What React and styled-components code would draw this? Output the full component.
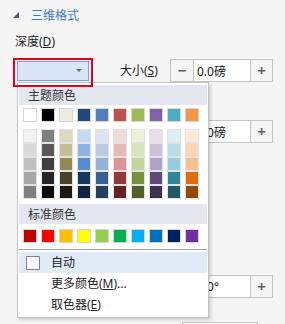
import React from "react";
import styled, { createGlobalStyle } from "styled-components";

const Global = createGlobalStyle`
  html, body { margin: 0; padding: 0; background: #f5f5f5; }
  body {
    font-family: "Noto Sans", "Noto Sans CJK SC", sans-serif;
    font-size: 12px;
    color: #222;
    width: 285px;
    height: 324px;
    overflow: hidden;
  }
`;

const Panel = styled.div`
  display: flex;
  flex-direction: column;
  width: 285px;
  box-sizing: border-box;
  & > * {
    flex-shrink: 0;
  }
`;

const Header = styled.div`
  height: 30px;
  display: flex;
  align-items: center;
  padding-left: 13px;
  gap: 12px;
  color: #3a78d0;
  font-size: 12px;
`;

const Label = styled.div`
  margin-top: 4px;
  padding-left: 15px;
  line-height: 16px;
  height: 16px;
  color: #222;
`;

const U = styled.span`
  text-decoration: underline;
  text-underline-offset: 1px;
`;

const Row = styled.div`
  display: flex;
  align-items: center;
  height: 23px;
  margin-top: ${(p) => p.$top}px;
  padding-left: 17px;
`;

const DropWrap = styled.div`
  position: relative;
  width: 72px;
  height: 20px;
  z-index: 5;
`;

const DropButton = styled.div`
  width: 72px;
  height: 20px;
  box-sizing: border-box;
  border: 1px solid #7ea3d8;
  background: #dae6f7;
  display: flex;
  align-items: center;
  justify-content: flex-end;
  padding-right: 6px;
`;

const RedMark = styled.div`
  position: absolute;
  left: -4px;
  top: -3px;
  width: 80px;
  height: 29px;
  box-sizing: border-box;
  border: 2px solid #e60012;
  z-index: 20;
  pointer-events: none;
`;

const SideLabel = styled.div`
  width: 50px;
  margin-left: 31px;
  line-height: 16px;
`;

const Spacer = styled.div`
  width: 153px;
`;

const Stepper = styled.div`
  display: flex;
  height: 23px;
  box-sizing: border-box;
  border: 1px solid #c6c6c6;
`;

const StepBtn = styled.div`
  width: ${(p) => p.$w}px;
  display: flex;
  align-items: center;
  justify-content: center;
  color: #5d6470;
  font-size: 15px;
  font-weight: bold;
  line-height: 1;
`;

const StepInput = styled.div`
  width: 58px;
  background: #fff;
  border-left: 1px solid #c6c6c6;
  border-right: 1px solid #c6c6c6;
  display: flex;
  align-items: center;
  padding-left: 3px;
  box-sizing: border-box;
  color: #111;
  font-size: 12px;
`;

const BottomBox = styled.div`
  margin-top: 24px;
  margin-left: 182px;
  width: 76px;
  height: 2px;
  border: 1px solid #c6c6c6;
  border-bottom: none;
  box-sizing: border-box;
`;

const Popup = styled.div`
  position: absolute;
  left: 0;
  top: 21px;
  width: 192px;
  box-sizing: border-box;
  background: #fff;
  border: 1px solid #c4c4c4;
  box-shadow: 2px 2px 3px rgba(0, 0, 0, 0.16);
  padding: 2px 1px;
  display: flex;
  flex-direction: column;
`;

const Band = styled.div`
  height: 20px;
  margin-top: ${(p) => p.$top || 0}px;
  background: #e3e7f0;
  display: flex;
  align-items: center;
  padding-left: 9px;
  color: #333;
  font-size: 12px;
`;

const SwatchRow = styled.div`
  display: flex;
  gap: 4px;
  padding-left: 4px;
  margin-top: ${(p) => p.$top}px;
`;

const Swatch = styled.div`
  width: 14px;
  height: 14px;
  box-sizing: border-box;
  border: 1px solid #d6d6d6;
  background: ${(p) => p.$c};
`;

const ShadeCol = styled.div`
  width: 14px;
  box-sizing: border-box;
  padding: 1px;
  background: #e2e2e2;
  display: flex;
  flex-direction: column;
  gap: 2px;
`;

const ShadeCell = styled.div`
  width: 12px;
  height: 12px;
  background: ${(p) => p.$c};
`;

const Separator = styled.div`
  height: 1px;
  background: #a3a3a3;
  margin-top: 6px;
`;

const MenuItem = styled.div`
  height: 21px;
  display: flex;
  align-items: center;
  padding-left: 32px;
  margin-top: ${(p) => p.$top || 0}px;
  background: ${(p) => (p.$active ? "#e1ebf8" : "transparent")};
  position: relative;
  color: #222;
`;

const Check = styled.div`
  position: absolute;
  left: 7px;
  top: 4px;
  width: 14px;
  height: 14px;
  box-sizing: border-box;
  border: 1px solid #858585;
  background: #f4f7fc;
`;

const theme = ["#ffffff", "#000000", "#eeece1", "#1f497d", "#4f81bd", "#c0504d", "#9bbb59", "#8064a2", "#4bacc6", "#f79646"];
const shades = [
  ["#f2f2f2", "#d9d9d9", "#bfbfbf", "#a6a6a6", "#808080"],
  ["#7f7f7f", "#595959", "#3f3f3f", "#262626", "#0d0d0d"],
  ["#ddd9c3", "#c4bd97", "#938953", "#494429", "#1d1b10"],
  ["#c6d9f0", "#8db3e2", "#548dd4", "#17365d", "#0f243e"],
  ["#dbe5f1", "#b8cce4", "#95b3d7", "#366092", "#244061"],
  ["#f2dcdb", "#e5b9b7", "#d99694", "#953734", "#632423"],
  ["#ebf1dd", "#d7e3bc", "#c3d69b", "#76923c", "#4f6128"],
  ["#e5e0ec", "#ccc1d9", "#b2a2c7", "#5f497a", "#3f3151"],
  ["#dbeef3", "#b7dde8", "#92cddc", "#31859b", "#205867"],
  ["#fdeada", "#fbd5b5", "#fac08f", "#e36c09", "#974806"],
];
const standard = ["#c00000", "#ff0000", "#ffc000", "#ffff00", "#92d050", "#00b050", "#00b0f0", "#0070c0", "#002060", "#7030a0"];

function StepperBox({ value }) {
  return (
    <Stepper>
      <StepBtn $w={22}>−</StepBtn>
      <StepInput>{value}</StepInput>
      <StepBtn $w={21}>+</StepBtn>
    </Stepper>
  );
}

export default function App() {
  return (
    <>
      <Global />
      <Panel>
        <Header>
          <svg width="6" height="6" viewBox="0 0 6 6">
            <polygon points="6,0 6,6 0,6" fill="#3f5f8f" />
          </svg>
          <span>三维格式</span>
        </Header>
        <Label>
          深度(<U>D</U>)
        </Label>
        <Row $top={9}>
          <DropWrap>
            <DropButton>
              <svg width="6" height="3" viewBox="0 0 6 3">
                <polygon points="0,0 6,0 3,3" fill="#6a6a6a" />
              </svg>
            </DropButton>
            <RedMark />
            <Popup>
              <Band>主题颜色</Band>
              <SwatchRow $top={3}>
                {theme.map((c) => (
                  <Swatch key={c} $c={c} />
                ))}
              </SwatchRow>
              <SwatchRow $top={7}>
                {shades.map((col, i) => (
                  <ShadeCol key={i}>
                    {col.map((c) => (
                      <ShadeCell key={c} $c={c} />
                    ))}
                  </ShadeCol>
                ))}
              </SwatchRow>
              <Band $top={5}>标准颜色</Band>
              <SwatchRow $top={5}>
                {standard.map((c) => (
                  <Swatch key={c} $c={c} />
                ))}
              </SwatchRow>
              <Separator />
              <MenuItem $active $top={2}>
                <Check />
                自动
              </MenuItem>
              <MenuItem>
                更多颜色(<U>M</U>)...
              </MenuItem>
              <MenuItem>
                取色器(<U>E</U>)
              </MenuItem>
            </Popup>
          </DropWrap>
          <SideLabel>
            大小(<U>S</U>)
          </SideLabel>
          <StepperBox value="0.0磅" />
        </Row>
        <Row $top={38}>
          <Spacer />
          <StepperBox value="0.0磅" />
        </Row>
        <Row $top={132}>
          <Spacer />
          <StepperBox value="0.0°" />
        </Row>
        <BottomBox />
      </Panel>
    </>
  );
}
